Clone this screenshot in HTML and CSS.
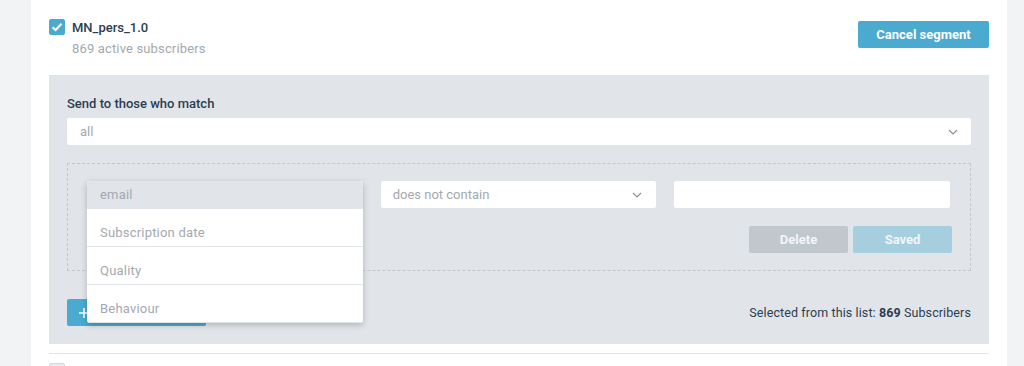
FILE: index.html
```html
<!DOCTYPE html>
<html lang="en">
<head>
    <meta charset="UTF-8">
    <title>Segment</title>
    <link rel="stylesheet" href="styles.css">
</head>
<body>

<div class="page">
    <div class="card">
        <div class="list-head">
            <span class="check on">
                <svg width="12" height="10" viewBox="0 0 12 10"><path d="M1.5 5.2 4.6 8 10.5 1.8" fill="none" stroke="#fff" stroke-width="2"/></svg>
            </span>
            <div class="list-info">
                <div class="list-name">MN_pers_1.0</div>
                <div class="list-count">869 active subscribers</div>
            </div>
            <button class="btn btn-blue">Cancel segment</button>
        </div>

        <div class="segment">
            <label class="seg-label">Send to those who match</label>
            <div class="select">
                <span>all</span>
                <svg class="chev" width="10" height="6" viewBox="0 0 10 6"><path d="M1 1l4 4 4-4" fill="none" stroke="#8a9299" stroke-width="1.2"/></svg>
            </div>

            <div class="rule">
                <div class="rule-row">
                    <div class="field-wrap">
                        <div class="select"><span>email</span></div>
                        <ul class="menu">
                            <li class="active">email</li>
                            <li>Subscription date</li>
                            <li>Quality</li>
                            <li>Behaviour</li>
                        </ul>
                    </div>
                    <div class="select">
                        <span>does not contain</span>
                        <svg class="chev" width="10" height="6" viewBox="0 0 10 6"><path d="M1 1l4 4 4-4" fill="none" stroke="#8a9299" stroke-width="1.2"/></svg>
                    </div>
                    <input class="text-input" type="text">
                </div>
                <div class="rule-actions">
                    <button class="btn btn-grey">Delete</button>
                    <button class="btn btn-light">Saved</button>
                </div>
            </div>

            <div class="seg-foot">
                <button class="btn btn-blue btn-add" title="Add condition">
                    <svg width="10" height="10" viewBox="0 0 10 10"><path d="M5 0v10M0 5h10" stroke="#fff" stroke-width="1.6"/></svg>
                </button>
                <div class="selected">Selected from this list: <b>869</b> Subscribers</div>
            </div>
        </div>

        <div class="list-next">
            <span class="check"></span>
        </div>
    </div>
</div>

</body>
</html>
```

FILE: styles.css
```css
body {
    margin: 0;
    padding: 0;
    font-family: Roboto, "Liberation Sans", Arial, sans-serif;
    background-color: #f2f3f5;
    color: #2c3e50;
}

.page {
    padding: 0 17px 0 31px;
}

.card {
    background-color: #fff;
    padding: 19px 18px 0;
    height: 366px;
    box-sizing: border-box;
}

.list-head {
    display: flex;
    align-items: flex-start;
    height: 56px;
}

.check {
    width: 16px;
    height: 16px;
    border-radius: 2px;
    background-color: #fff;
    border: 1px solid #c9ced3;
    box-sizing: border-box;
    display: flex;
    align-items: center;
    justify-content: center;
    flex-shrink: 0;
}

.check.on {
    background-color: #4aaad0;
    border-color: #4aaad0;
}

.list-info {
    margin-left: 7px;
    flex: 1;
}

.list-name {
    font-size: 13px;
    font-weight: 500;
    line-height: 17px;
    color: #2c3e50;
}

.list-count {
    font-size: 13px;
    line-height: 16px;
    margin-top: 5px;
    color: #a3a9b0;
    letter-spacing: 0.15px;
}

.btn {
    font-family: Roboto, "Liberation Sans", Arial, sans-serif;
    font-size: 13px;
    font-weight: bold;
    color: #fff;
    border: none;
    border-radius: 2px;
    height: 27px;
    padding: 0 18px;
    cursor: pointer;
}

.btn-blue {
    background-color: #4aaad0;
    margin-top: 2px;
    width: 131px;
    padding: 0;
}

.btn-grey {
    background-color: #c0c8cd;
    width: 99px;
    color: #f3f5f6;
}

.btn-light {
    background-color: #a5cfdf;
    width: 99px;
    color: #eef6f9;
}

.segment {
    background-color: #e1e5e9;
    padding: 22px 18px 18px;
}

.seg-label {
    display: block;
    font-size: 13px;
    font-weight: 500;
    line-height: 14px;
    margin-bottom: 7px;
    color: #2c3e50;
}

.select {
    background-color: #fff;
    border-radius: 2px;
    height: 27px;
    display: flex;
    align-items: center;
    justify-content: space-between;
    padding: 0 13px;
    font-size: 13px;
    color: #a3a9b0;
}

.chev {
    margin-right: 0;
}

.rule {
    margin-top: 18px;
    border: 1px dashed #c3c8cd;
    padding: 17px 20px 17px 19px;
}

.rule-row {
    display: grid;
    grid-template-columns: 1fr 1fr 1fr;
    gap: 18px;
}

.rule-row .select {
    padding: 0 14px 0 12px;
}

.field-wrap {
    position: relative;
}

.text-input {
    height: 27px;
    border: none;
    border-radius: 2px;
    background-color: #fff;
    box-sizing: border-box;
    width: 100%;
}

.menu {
    position: absolute;
    left: 0;
    top: 0;
    width: 100%;
    height: 142px;
    overflow: hidden;
    margin: 0;
    padding: 0;
    list-style: none;
    background-color: #fff;
    border-radius: 3px;
    box-shadow: 0 2px 6px rgba(0, 0, 0, 0.22);
    z-index: 2;
}

.menu li {
    height: 38px;
    box-sizing: border-box;
    padding: 17px 13px 0;
    font-size: 13px;
    line-height: 14px;
    color: #a3a9b0;
    letter-spacing: 0.2px;
    border-bottom: 1px solid #e1e5e9;
}

.menu li.active {
    background-color: #e1e5e9;
    margin-top: -10px;
}

.rule-actions {
    display: flex;
    justify-content: flex-end;
    gap: 5px;
    margin-top: 18px;
    margin-right: -2px;
}

.seg-foot {
    display: flex;
    justify-content: space-between;
    align-items: center;
    margin-top: 28px;
}

.btn-add {
    margin-top: 0;
    width: 139px;
    text-align: left;
    padding-left: 12px;
    display: flex;
    align-items: center;
}

.selected {
    font-size: 12.5px;
    color: #2c3e50;
    letter-spacing: 0.1px;
}

.selected b {
    font-weight: bold;
}

.list-next {
    margin-top: 9px;
    border-top: 1px solid #e1e5e9;
    padding-top: 9px;
}

.list-next .check {
    background-color: #e9ecef;
    border-color: #d5d9dd;
}
```
